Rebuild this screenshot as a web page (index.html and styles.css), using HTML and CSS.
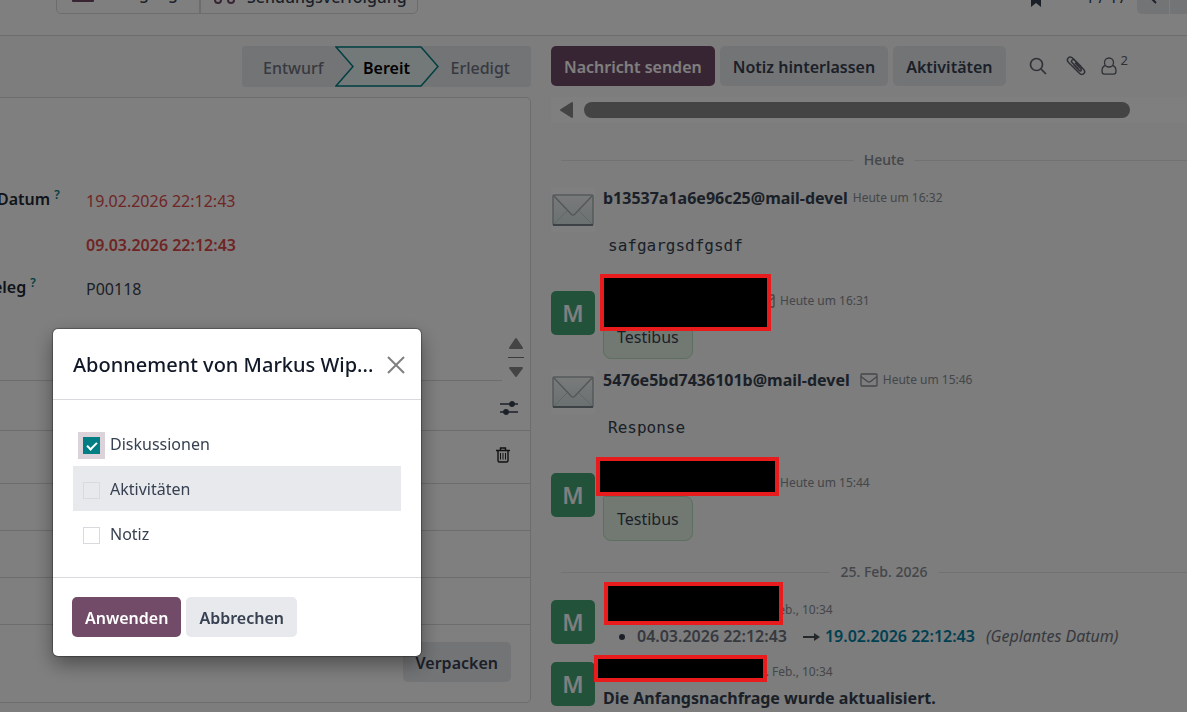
FILE: index.html
```html
<!DOCTYPE html>
<html lang="de">
<head>
  <meta charset="UTF-8">
  <title>Transfer | Abonnement bearbeiten</title>
  <meta name="viewport" content="width=device-width, initial-scale=1.0">
  <link rel="stylesheet" href="styles.css">
</head>
<body>
  <header class="control-panel">
    <div class="stat-buttons">
      <button class="stat"><svg width="24" height="24" viewBox="0 0 24 24"><rect x="1" y="1" width="22" height="22" rx="1" fill="#714b67"/></svg><span>Vorgänge</span></button>
      <button class="stat stat-low"><svg width="24" height="24" viewBox="0 0 24 24" fill="none" stroke="#714b67" stroke-width="2"><path d="M2 3h12v14H2zM14 8h6l3 4v5h-9"/><circle cx="5" cy="20" r="3"/><circle cx="18" cy="20" r="3"/></svg><span>Sendungsverfolgung</span></button>
    </div>
    <div class="pager">
      <svg class="bookmark" width="10" height="16" viewBox="0 0 10 16"><path d="M0 0h10v16l-5-4-5 4z" fill="#374151"/></svg>
      <span>1 / 17</span>
      <div class="pager-buttons">
        <button aria-label="Zurück"><svg width="10" height="14" viewBox="0 0 10 14"><path d="M8 1L2 7l6 6" fill="none" stroke="#374151" stroke-width="2"/></svg></button>
        <button aria-label="Weiter"></button>
      </div>
    </div>
  </header>

  <main class="content">
    <section class="form-view">
      <div class="statusbar">
        <button class="step">Entwurf</button>
        <button class="step current"><svg viewBox="0 0 104 41" preserveAspectRatio="none"><path d="M1 1H86L103 20.500L86 40H1L18 20.500Z" fill="#e6f2f3" stroke="#017e84" stroke-width="1.500"/></svg><span>Bereit</span></button>
        <button class="step">Erledigt</button>
      </div>

      <div class="sheet">
        <dl class="fields">
          <dt>Geplantes Datum <sup>?</sup></dt>
          <dd class="late">19.02.2026 22:12:43</dd>
          <dt></dt>
          <dd class="late deadline">09.03.2026 22:12:43</dd>
          <dt>Referenzbeleg <sup>?</sup></dt>
          <dd>P00118</dd>
        </dl>
        <div class="tabs">
          <div class="spinner">
            <svg width="16" height="42" viewBox="0 0 16 42"><path d="M8 2l6 9H2z" fill="#888" stroke="#888" stroke-width="2" stroke-linejoin="round"/><path d="M0 20.500h16" stroke="#777"/><path d="M8 39l6-8H2z" fill="#888" stroke="#888" stroke-width="2" stroke-linejoin="round"/></svg>
          </div>
        </div>
        <div class="lines">
          <div class="line line-head">
            <svg width="18" height="16" viewBox="0 0 18 16" stroke="#374151" stroke-width="1.300"><path d="M0 4h18M0 12h18"/><circle cx="12" cy="4" r="2.300" fill="#374151"/><circle cx="6" cy="12" r="2.300" fill="#374151"/></svg>
          </div>
          <div class="line line-item">
            <svg width="14" height="16" viewBox="0 0 14 16" fill="none" stroke="#222" stroke-width="1.400"><path d="M0 3.500h14M4.500 3V1h5v2M2 4v9.500q0 1.500 1.500 1.500h7q1.500 0 1.500-1.500V4"/><path d="M4.500 6v6.500M7 6v6.500M9.500 6v6.500" stroke-width="1"/></svg>
          </div>
          <div class="line"></div>
          <div class="line"></div>
          <div class="line"></div>
        </div>
        <div class="sheet-footer"><button class="btn btn-secondary">Verpacken</button></div>
      </div>
    </section>

    <aside class="chatter">
      <div class="chatter-topbar">
        <button class="btn btn-primary">Nachricht senden</button>
        <button class="btn btn-secondary">Notiz hinterlassen</button>
        <button class="btn btn-secondary">Aktivitäten</button>
        <button class="tool" aria-label="Suchen"><svg width="18" height="18" viewBox="0 0 18 18" fill="none" stroke="#5f636f" stroke-width="1.700"><circle cx="7.500" cy="7.500" r="6"/><path d="M12 12l5 5"/></svg></button>
        <button class="tool" aria-label="Anhänge"><svg width="20" height="20" viewBox="0 0 20 20" fill="none" stroke="#5f636f" stroke-width="1.500"><path d="M12.500 13L6 6.500c-1-1-.4-2 .2-2.500s1.600-.6 2.600.4l8.700 8.800c1.500 1.600 1.400 3.300.4 4.400s-3 1.200-4.500-.3L2.800 6.700C1.200 5.100 1 3.200 2.200 2s3.300-1 4.900.6l8 8M9 6.800l5.800 6c.6.600.7 1.300.2 1.800s-1.200.4-1.800-.2L7.500 8.500"/></svg></button>
        <button class="tool followers" aria-label="Follower"><svg width="16" height="18" viewBox="0 0 16 18" fill="none" stroke="#5f636f" stroke-width="1.300"><circle cx="8" cy="5.500" r="4.500"/><path d="M4.500 8.500C2 9 1 11 1 14c0 2 1 3.200 2.500 3.200h9C14 17.200 15 16 15 14c0-3-1-5-3.500-5.500"/></svg><sup>2</sup></button>
      </div>

      <div class="hscroll">
        <svg width="14" height="18" viewBox="0 0 14 18"><path d="M13 2v14L2 9z" fill="#888" stroke="#888" stroke-width="2" stroke-linejoin="round"/></svg>
        <div class="hscroll-thumb"></div>
      </div>

      <div class="thread">
        <div class="day"><span>Heute</span></div>

        <article class="message">
          <div class="avatar envelope"><svg width="44" height="44" viewBox="0 0 44 44"><use href="#mail-picture"/></svg></div>
          <div class="message-main">
            <div class="message-head"><strong>b13537a1a6e96c25@mail-devel</strong> <time>Heute um 16:32</time></div>
            <pre>safgargsdfgsdf</pre>
          </div>
        </article>

        <article class="message">
          <div class="avatar">M</div>
          <div class="message-main">
            <div class="message-head hidden-name"><svg class="mail" width="18" height="14" viewBox="0 0 18 14"><use href="#mail-icon"/></svg><time>Heute um 16:31</time></div>
            <div class="bubble">Testibus</div>
          </div>
          <div class="redacted redacted-a"></div>
        </article>

        <article class="message">
          <div class="avatar envelope"><svg width="44" height="44" viewBox="0 0 44 44"><use href="#mail-picture"/></svg></div>
          <div class="message-main">
            <div class="message-head"><strong>5476e5bd7436101b@mail-devel</strong> <svg class="mail" width="18" height="14" viewBox="0 0 18 14"><use href="#mail-icon"/></svg><time>Heute um 15:46</time></div>
            <pre>Response</pre>
          </div>
        </article>

        <article class="message">
          <div class="avatar">M</div>
          <div class="message-main">
            <div class="message-head hidden-name"><svg class="mail" width="18" height="14" viewBox="0 0 18 14"><use href="#mail-icon"/></svg><time>Heute um 15:44</time></div>
            <div class="bubble">Testibus</div>
          </div>
          <div class="redacted redacted-b"></div>
        </article>

        <div class="day"><span>25. Feb. 2026</span></div>

        <article class="message">
          <div class="avatar">M</div>
          <div class="message-main">
            <div class="message-head hidden-date"><time>25. Feb., 10:34</time></div>
            <ul class="tracking">
              <li><span class="old">04.03.2026 22:12:43</span><svg width="17" height="10" viewBox="0 0 17 10"><path d="M0 5h13" stroke="#495057" stroke-width="2"/><path d="M11 1l6 4-6 4z" fill="#495057"/></svg><span class="new">19.02.2026 22:12:43</span><em>(Geplantes Datum)</em></li>
            </ul>
          </div>
          <div class="redacted redacted-c"></div>
        </article>

        <article class="message">
          <div class="avatar">M</div>
          <div class="message-main">
            <div class="message-head hidden-date"><time>25. Feb., 10:34</time></div>
            <p class="note">Die Anfangsnachfrage wurde aktualisiert.</p>
          </div>
          <div class="redacted redacted-d"></div>
        </article>
      </div>
    </aside>
  </main>

  <div class="backdrop"></div>

  <form class="modal" role="dialog" aria-labelledby="modal-title">
    <div class="modal-header">
      <h4 id="modal-title">Abonnement von Markus Wip...</h4>
      <button type="button" class="close" aria-label="Schließen"><svg width="18" height="18" viewBox="0 0 18 18"><path d="M1 1l16 16M17 1L1 17" stroke="#7f7f7f" stroke-width="2"/></svg></button>
    </div>
    <div class="modal-body">
      <label class="subtype"><input type="checkbox" class="focused" checked> <span>Diskussionen</span></label>
      <label class="subtype hovered"><input type="checkbox"> <span>Aktivitäten</span></label>
      <label class="subtype"><input type="checkbox"> <span>Notiz</span></label>
    </div>
    <div class="modal-footer">
      <button type="button" class="btn btn-primary">Anwenden</button>
      <button type="button" class="btn btn-secondary">Abbrechen</button>
    </div>
  </form>

  <!-- shared drawings -->
  <svg class="defs" width="0" height="0">
    <defs>
      <linearGradient id="paper" x1="0" y1="0" x2="0" y2="1"><stop offset="0" stop-color="#f4f6f6"/><stop offset="1" stop-color="#d5e0e2"/></linearGradient>
      <symbol id="mail-picture" viewBox="0 0 44 44">
        <path d="M0 0h44v44H0z" fill="#fff"/>
        <rect x="2" y="7" width="40" height="30" rx="1" fill="url(#paper)" stroke="#a9b4b7" stroke-width="1.500"/>
        <path d="M2 37h40" stroke="#78858a" stroke-width="2"/>
        <path d="M3 36l14-14M41 36L27 22" stroke="#c0cacd" fill="none"/>
        <path d="M3 8l17 18q2 2 4 0L41 8" stroke="#a6b1b3" stroke-width="1.500" fill="none"/>
      </symbol>
      <symbol id="mail-icon" viewBox="0 0 18 14">
        <rect x="1" y="1" width="16" height="12" rx="1" fill="none" stroke="#888c94" stroke-width="1.300"/>
        <path d="M1 3.500l6.500 5q1.500 1 3 0l6.500-5" fill="none" stroke="#888c94" stroke-width="1.300"/>
      </symbol>
    </defs>
  </svg>
</body>
</html>
```
FILE: styles.css
```css
* {
  box-sizing: border-box;
}
body {
  margin: 0;
  height: 100vh;
  display: flex;
  flex-direction: column;
  overflow: hidden;
  font-family: "Noto Sans", "Open Sans", sans-serif;
  font-size: 16px;
  line-height: 24px;
  color: #374151;
  background: #f8faf9;
}
button {
  font: inherit;
  color: inherit;
  border: none;
  padding: 0;
  background: none;
  cursor: pointer;
}
svg {
  flex: none;
  display: block;
}
.defs {
  position: absolute;
}

/* control panel, scrolled half out of view */
.control-panel {
  height: 36px;
  flex: none;
  display: flex;
  justify-content: space-between;
  align-items: flex-end;
  padding: 0 0 21px 56px;
  border-bottom: 1px solid #d8dadd;
  background: #fff;
}
.stat-buttons {
  display: flex;
  border: 1px solid #d8dadd;
  border-radius: 5px;
}
.stat {
  display: flex;
  align-items: flex-end;
  gap: 18px;
  height: 44px;
  padding: 0 10px 8px 14px;
  font-weight: 500;
}
.stat svg {
  margin-bottom: 2px;
}
.stat:first-child {
  width: 144px;
  border-right: 2px solid #d8dadd;
}
.stat-low {
  gap: 10px;
  padding: 0 10px 4px 12px;
}
.stat-low svg {
  margin-bottom: 5px;
}
.pager {
  display: flex;
  align-items: flex-end;
}
.bookmark {
  margin: 0 44px 7px 0;
}
.pager span {
  margin: 0 10px 5px 0;
}
.pager-buttons {
  display: flex;
  gap: 1px;
}
.pager-buttons button {
  width: 32px;
  height: 40px;
  display: flex;
  justify-content: center;
  align-items: flex-end;
  padding-bottom: 10px;
  background: #e7e9ed;
  border-radius: 5px 0 0 5px;
}
.pager-buttons button + button {
  width: 17px;
  border-radius: 0;
}

.content {
  flex: 1;
  min-height: 0;
  display: grid;
  grid-template-columns: 541fr 646fr;
}

/* form */
.form-view {
  padding: 10px 10px 9px 0;
  display: flex;
  flex-direction: column;
  gap: 10px;
  min-width: 0;
}
.statusbar {
  align-self: flex-end;
  display: flex;
  height: 41px;
  background: #e7e9ed;
  border-radius: 3px;
}
.step {
  padding: 3px 21px 0;
  font-weight: 500;
  color: #6f7380;
}
.step:first-child {
  padding-right: 11px;
}
.step:last-child {
  padding-left: 12px;
}
.step.current {
  position: relative;
  width: 104px;
  padding: 3px 0 0;
  font-weight: 600;
  color: #000;
}
.step.current svg {
  position: absolute;
  inset: 0;
  width: 100%;
  height: 100%;
}
.step.current span {
  position: relative;
}
.sheet {
  flex: 1;
  margin-left: -106px;
  display: flex;
  flex-direction: column;
  background: #fff;
  border: 1px solid #d8dadd;
  border-radius: 5px;
}
.fields {
  display: grid;
  grid-template-columns: 172px 1fr;
  grid-auto-rows: 44px;
  margin: 81px 20px 21px 19px;
}
.fields dt {
  padding-top: 8px;
  font-weight: 600;
  color: #1f2937;
  white-space: nowrap;
}
.fields dd {
  margin: 0;
  padding-top: 10px;
}
.fields .late {
  color: #e04a4a;
}
.fields .deadline {
  font-weight: 600;
}
sup {
  font-size: 12px;
  line-height: 12px;
  color: #017e84;
}
.tabs {
  height: 49px;
  display: flex;
  justify-content: flex-end;
  border-bottom: 1px solid #d8dadd;
}
.spinner {
  width: 28px;
  height: 49px;
  padding: 5px 6px 0;
  background: #fff;
}
.line {
  display: flex;
  justify-content: flex-end;
  align-items: center;
  height: 47px;
  padding-right: 12px;
  border-bottom: 1px solid #d8dadd;
}
.line-head {
  height: 50px;
  padding-top: 5px;
}
.line-item {
  height: 53px;
  padding: 0 20px 4px 0;
}
.sheet-footer {
  display: flex;
  justify-content: flex-end;
  padding: 17px 19px;
}

.btn {
  height: 40px;
  padding: 1px 13px 0;
  font-weight: 600;
  border-radius: 5px;
  white-space: nowrap;
}
.btn-primary {
  background: #714b67;
  color: #fff;
}
.btn-secondary {
  background: #e7e9ed;
  color: #374151;
}

/* chatter */
.chatter {
  min-width: 0;
  overflow: hidden;
  padding: 10px 0 0 10px;
}
.chatter-topbar {
  display: flex;
  align-items: center;
  gap: 5px;
}
.tool {
  display: flex;
  align-items: center;
  margin-left: 14px;
}
.tool:nth-child(4) {
  margin-left: 18px;
}
.followers {
  margin-left: 10px;
}
.followers sup {
  align-self: flex-start;
  margin: -3px 0 0 4px;
  font-size: 13px;
  color: #5f636f;
}
.hscroll {
  display: flex;
  align-items: center;
  gap: 11px;
  height: 26px;
  margin-top: 11px;
  padding: 0 57px 0 8px;
  background: #fff;
}
.hscroll-thumb {
  flex: 1;
  height: 16px;
  border-radius: 8px;
  background: #888;
}
.thread {
  margin-right: -20px;
  padding-top: 16px;
}
.day {
  display: flex;
  align-items: center;
  gap: 10px;
  height: 42px;
  margin: 0 0 6px 10px;
  font-size: 14px;
  font-weight: 500;
  color: #888c94;
}
.day::before,
.day::after {
  content: "";
  flex: 1;
  border-top: 1px solid #e3e5e8;
}
.message {
  position: relative;
  display: flex;
  gap: 8px;
  margin-bottom: 10px;
}
.avatar {
  width: 44px;
  height: 44px;
  flex: none;
  margin-top: 1px;
  border-radius: 5px;
  background: #46a577;
  color: #fff;
  font-size: 23px;
  font-weight: 600;
  line-height: 44px;
  text-align: center;
}
.envelope {
  background: #fff;
}
.message-head {
  display: flex;
  align-items: center;
  height: 22px;
  white-space: nowrap;
}
.message-head strong {
  font-weight: 700;
  color: #374151;
}
.message-head time {
  margin-left: 5px;
  font-size: 12px;
  color: #888c94;
}
.message-head .mail {
  margin-left: 10px;
}
.hidden-name {
  padding-left: 144px;
}
.hidden-date {
  padding-left: 144px;
}
pre {
  margin: 25px 5px 22px;
  font-family: "DejaVu Sans Mono", "Liberation Mono", monospace;
  font-size: 16px;
  line-height: 24px;
}
.bubble {
  width: max-content;
  margin-top: 2px;
  padding: 11px 13px 9px;
  line-height: 23px;
  background: #e4f3e6;
  border: 1px solid #b9dfc0;
  border-radius: 2px 8px 8px 8px;
}
.tracking {
  margin: 0;
  padding-left: 34px;
  line-height: 30px;
}
.tracking li {
  white-space: nowrap;
}
.tracking svg {
  display: inline-block;
  margin: 0 5px 0 16px;
}
.tracking .old,
.tracking .new {
  font-weight: 600;
}
.tracking .old {
  color: #6f7380;
}
.tracking .new {
  color: #0180a5;
}
.tracking em {
  margin-left: 11px;
  color: #6f7380;
}
.note {
  margin: 0;
  font-weight: 700;
  line-height: 30px;
}

/* blacked out names, drawn over the dimmed page */
.redacted {
  position: absolute;
  z-index: 20;
  background: #000;
  border: 4px solid #e81c1c;
}
.redacted-a {
  left: 49px;
  top: -16px;
  width: 171px;
  height: 57px;
}
.redacted-b {
  left: 45px;
  top: -15px;
  width: 183px;
  height: 39px;
}
.redacted-c {
  left: 53px;
  top: -17px;
  width: 179px;
  height: 43px;
}
.redacted-d {
  left: 43px;
  top: -6px;
  width: 173px;
  height: 27px;
}

/* modal */
.backdrop {
  position: fixed;
  inset: 0;
  z-index: 10;
  background: rgba(0, 0, 0, 0.5);
}
.modal {
  position: fixed;
  left: 53px;
  top: 329px;
  z-index: 30;
  width: 368px;
  background: #fff;
  border-radius: 5px;
  box-shadow: 0 0 1px 1px rgba(0, 0, 0, 0.3), 0 8px 20px rgba(0, 0, 0, 0.4);
}
.modal-header {
  display: flex;
  align-items: center;
  justify-content: space-between;
  height: 71px;
  padding: 2px 16px 0 20px;
  border-bottom: 1px solid #d8dadd;
}
.modal-header h4 {
  margin: 0;
  font-size: 20px;
  font-weight: 500;
  color: #111827;
  white-space: nowrap;
}
.modal-body {
  padding: 21px 20px;
}
.subtype {
  display: flex;
  align-items: center;
  gap: 10px;
  height: 45px;
  padding: 1px 0 0 10px;
}
.hovered {
  background: #e7e9ed;
}
.subtype input {
  appearance: none;
  width: 17px;
  height: 17px;
  margin: 2px 0 0;
  border: 1px solid #d8dadd;
}
.subtype input:checked {
  border-color: #017e84;
  background: #017e84;
}
.subtype input:checked::after {
  content: "";
  display: block;
  width: 8px;
  height: 4px;
  margin: 4px 0 0 3px;
  border: solid #fff;
  border-width: 0 0 2px 2px;
  transform: rotate(-45deg);
}
.subtype .focused {
  box-shadow: 0 0 0 5px #dcd2d9;
}
.modal-footer {
  display: flex;
  gap: 5px;
  padding: 19px;
  border-top: 1px solid #d8dadd;
}
```
